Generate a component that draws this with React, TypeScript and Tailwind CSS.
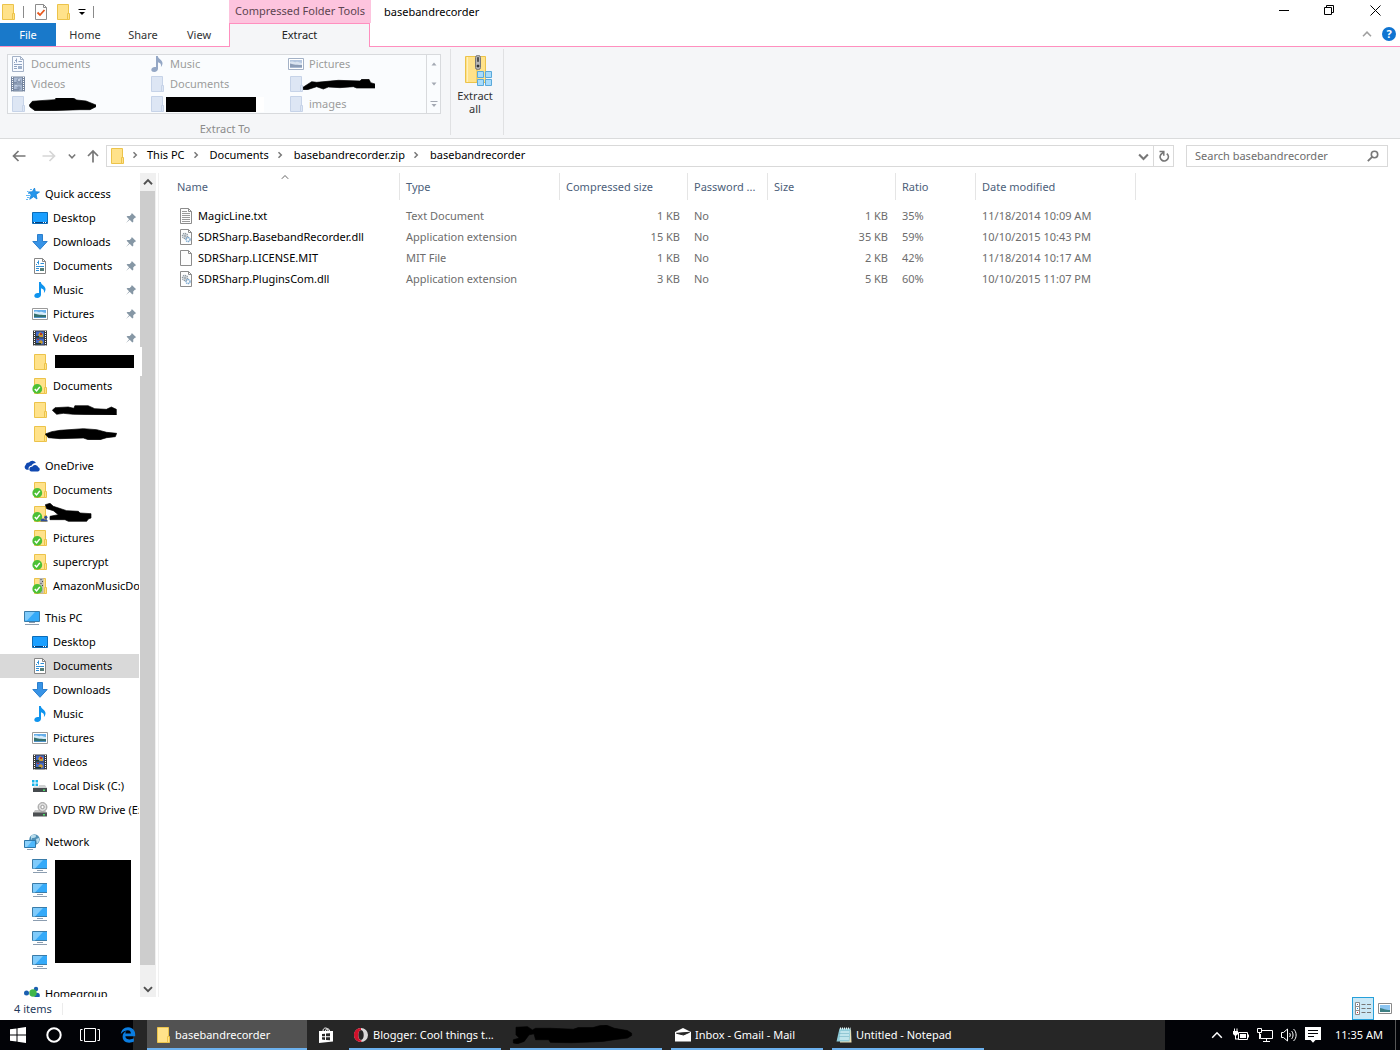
import type { ReactNode } from 'react';
import { FaEdgeLegacy } from 'react-icons/fa';

type IconProps = { className?: string };

/* ---------- 16px icons ---------- */

function Svg({ children, className = 'h-4 w-4', box = '0 0 16 16' }: { children: ReactNode; className?: string; box?: string }) {
  return (
    <svg viewBox={box} className={`${className} shrink-0`} fill="none" aria-hidden="true">
      {children}
    </svg>
  );
}

function FolderShape({ fill = '#ffe28a', edge = '#ecc34a' }: { fill?: string; edge?: string }) {
  return (
    <>
      <path d="M2.500.5h11v15h-11z" fill={fill} stroke={edge} />
      <path d="M12.500 9.500h2v6h-2z" fill={fill} stroke={edge} />
    </>
  );
}

const Folder = ({ className }: IconProps) => (
  <Svg className={className}>
    <FolderShape />
  </Svg>
);

const FadedFolder = () => (
  <Svg>
    <FolderShape fill="#dde6f4" edge="#c6d3e8" />
  </Svg>
);

function SyncBadge() {
  return (
    <>
      <circle cx="5.300" cy="10.900" r="4.900" fill="#4cc035" />
      <path d="M2.800 11l1.800 1.900 3.200-4" stroke="#fff" strokeWidth="1.500" />
    </>
  );
}

const SyncedFolder = () => (
  <Svg>
    <FolderShape />
    <SyncBadge />
  </Svg>
);

const SharedFolder = () => (
  <Svg>
    <FolderShape />
    <SyncBadge />
    <circle cx="13.800" cy="11.300" r="1.600" fill="#2f4f97" />
    <path d="M8.500 15.500c0-2 1-3 2.200-3s1.600.6 1.800 1.200c.4-.6 3.300-.6 3.300 1.800z" fill="#2f4f97" />
  </Svg>
);

function Zipper() {
  return (
    <>
      <path d="M7.500 0h4v15.500h-4z" fill="#b9b9b9" />
      <path d="M8.500 1h1v1h-1zM10 3h1v1h-1zM8.500 5h1v1h-1zM10 7h1v1h-1zM8.500 12h1v1h-1z" fill="#4a4a4a" />
    </>
  );
}

const SyncedZip = () => (
  <Svg>
    <FolderShape />
    <Zipper />
    <SyncBadge />
  </Svg>
);

const Desktop = () => (
  <Svg>
    <path d="M.5 2.500h15v11H.5z" fill="#1a9fff" stroke="#0b6cb8" />
    <path d="M1 12h14v1H1z" fill="#0a3d78" />
    <path d="M2 12h1v1H2zM11 12h1v1h-1zM13 12h1v1h-1z" fill="#fff" />
  </Svg>
);

const Download = () => (
  <Svg>
    <path d="M5.500.5h5v7h4.700L8 15.300.8 7.500h4.700z" fill="#3793e6" stroke="#2b7fcd" />
  </Svg>
);

const Doc = ({ faded = false }: { faded?: boolean }) => (
  <Svg>
    <path d="M2.500.5h8l3 3v12h-11z" fill={faded ? '#f7faff' : '#fff'} stroke={faded ? '#a3b1c6' : '#868686'} />
    <path d="M10.500.5v3h3" stroke={faded ? '#a3b1c6' : '#868686'} />
    <path d="M4 6.500h1M5 4.500h2M6.500 2.500v4M8.500 5.500h3.500M4 8.500h8M4 10.500h3M4 12.500h3" stroke={faded ? '#8fa3c0' : '#2f8fd6'} />
    <path d="M8 10h4v3H8z" fill={faded ? '#9db0ca' : '#557d77'} />
  </Svg>
);

const Music = ({ faded = false }: { faded?: boolean }) => (
  <Svg>
    <path
      d="M7 0h1.800c.2 3 4.900 4 4.700 7.300 0 1.500-.6 2.700-1.600 3.700.6-2.700-.3-4-2.900-4.700v6.500c0 1.800-1.600 3.200-3.800 3.200C3.500 16 2.300 15.200 2.300 13.800c0-1.600 1.700-2.900 3.400-2.900.5 0 .9.1 1.300.2z"
      fill={faded ? '#94a7c5' : '#0f94ee'}
    />
  </Svg>
);

const Picture = ({ faded = false }: { faded?: boolean }) => (
  <Svg>
    <path d="M.5 2.500h15v11H.5z" fill="#fff" stroke={faded ? '#a3b1c6' : '#9a9a9a'} />
    <path d="M2 4h12v8H2z" fill={faded ? '#b5c7e0' : '#65aeea'} />
    <path d="M2 6c3-1.500 4 1 6 0s4 1 6 1v2H2z" fill={faded ? '#dae4f1' : '#d6ecfb'} />
    <path d="M2 7.500c3 .5 4 1.500 12 1.500V11H2z" fill={faded ? '#8c9db7' : '#35706f'} />
    <path d="M2 11h12v1H2z" fill={faded ? '#a8b9d2' : '#4f92c7'} />
  </Svg>
);

const Video = ({ faded = false }: { faded?: boolean }) => (
  <Svg>
    <path d="M1 .5h14v15H1z" fill={faded ? '#76869f' : '#3b3b3b'} />
    <path d="M4 1.500h8v6H4zM4 8.500h8v6H4z" fill={faded ? '#a9b9d2' : '#4169c9'} />
    <path d="M2.500 1v14.500M13.500 1v14.500" stroke="#fff" strokeWidth="1" strokeDasharray="1 1" />
    <path d="M6 5l2-3 3 2v3H8zM6 12l3-2 2 2-1 2z" fill={faded ? '#8898b2' : '#c99a2c'} />
    <path d="M8 3h2v2H8zM5 9h2v1H5z" fill={faded ? '#c2cfe2' : '#b5342c'} />
    <path d="M4 6h3v1.500H4zM4 13h5v1.500H4z" fill={faded ? '#7d8da8' : '#1e3a28'} />
  </Svg>
);

const QuickAccess = () => (
  <Svg>
    <path d="M10.500 2l.9 3.700 4.100.3-3.400 2.400.9 4.600-3.400-2.300-3.900 2.600 1.500-4.400L4.500 6l3.800-.2z" fill="#2596ec" stroke="#1683d8" strokeWidth=".8" />
    <path d="M6 3.500h2M3 5.500h1.500M4 7.500h1.500M2 9.500h4M3 11.500h2.500M2 13.500h2" stroke="#62b6f3" />
  </Svg>
);

const OneDrive = () => (
  <Svg>
    <path d="M2.700 11.800A2.800 2.800 0 011.600 7 3.300 3.300 0 015 4.600 4 4 0 0112 5c-3 .2-4 1.600-4.200 2.500-2.600.1-3.800 2.300-2.900 4.300z" fill="#1048b0" />
    <path d="M7.500 13.500a2.400 2.400 0 01.6-4.800 3.400 3.400 0 016.200.6 2.200 2.200 0 01-.2 4.200z" fill="#1048b0" />
  </Svg>
);

const Monitor = ({ small = false }: { small?: boolean }) => (
  <Svg>
    <path d={small ? 'M.5 1.500h15v9H.5z' : 'M.5 1.500h15v10H.5z'} fill="#35aaf9" stroke="#3a7ca9" />
    <path d="M1 2h10L3 10.500H1z" fill="#7fcbfb" />
    <path d="M5 12.500h6M1 14.500h14" stroke="#8b9db0" />
  </Svg>
);

const LocalDisk = () => (
  <Svg>
    <path d="M0 2h2.500v2.500H0zM3.500 2H6v2.500H3.500zM0 5.500h2.500V8H0zM3.500 5.500H6V8H3.500z" fill="#18b4ea" />
    <path d="M7 7h6l2 3H1l1-1.500h5z" fill="#d0d2d3" />
    <path d="M1 10h14v4H1z" fill="#454a4d" />
    <path d="M11 11.500h2V13h-2z" fill="#4be06a" />
  </Svg>
);

const DvdDrive = () => (
  <Svg>
    <path d="M3 8h10l2 3H1z" fill="#c4c4c4" />
    <circle cx="10.500" cy="5" r="4.400" fill="#dedede" stroke="#999" />
    <circle cx="10.500" cy="5" r="1.700" fill="#fff" stroke="#999" />
    <path d="M1 10.500h14v4H1z" fill="#4d5053" />
    <path d="M11 12h2v1.500h-2z" fill="#4be06a" />
  </Svg>
);

const NetworkGlobe = () => (
  <Svg>
    <circle cx="10.500" cy="5.500" r="5.200" fill="#4f8fb5" />
    <path d="M7 2c2-2 5-1 5 0s-1 2-3 2-1 2-2 2zM12 5l3-1v3l-2 3z" fill="#b7dcec" />
    <path d="M.5 6.500h11v7H.5z" fill="#4fb8fb" stroke="#2d78aa" />
    <path d="M1 7h7l-5 6H1z" fill="#8bd1fc" />
    <path d="M3 15.500h6" stroke="#8b9db0" />
  </Svg>
);

const Homegroup = () => (
  <Svg>
    <circle cx="2.500" cy="7" r="2.500" fill="#1a5fb0" />
    <circle cx="12" cy="3" r="2.200" fill="#1a5fb0" />
    <circle cx="13" cy="9.500" r="2.800" fill="#1a5fb0" />
    <circle cx="9" cy="7" r="3.700" fill="#3fb64a" />
  </Svg>
);

const Pin = () => (
  <Svg className="h-3 w-3" box="0 0 12 12">
    <path d="M6.800 1l4.400 4.300-1.300.4-1.700 1.700.1 2.300-1 .7-2.600-2.600L1 11l3.100-3.800L1.600 4.800l.8-.9 2.300.1 1.700-1.700z" fill="#8697a5" />
  </Svg>
);

function PageShape() {
  return (
    <>
      <path d="M2.500.5h8l3 3v12h-11z" fill="#fdfdfd" stroke="#8c8c8c" />
      <path d="M10.500.5v3h3" stroke="#8c8c8c" />
    </>
  );
}

const TextFile = () => (
  <Svg>
    <PageShape />
    <path d="M4 3.500h5M4 5.500h8M4 7.500h8M4 9.500h8M4 11.500h8M4 13.500h8" stroke="#9a9a9a" />
  </Svg>
);

const PlainFile = () => (
  <Svg>
    <PageShape />
  </Svg>
);

const DllFile = () => (
  <Svg>
    <PageShape />
    <circle cx="7" cy="7" r="2.500" stroke="#8f9aa3" strokeWidth="1.500" strokeDasharray="1.300 .6" />
    <circle cx="7" cy="7" r="1" stroke="#8f9aa3" />
    <circle cx="10" cy="10.500" r="2" stroke="#7ba8cf" strokeWidth="1.500" strokeDasharray="1.200 .5" />
  </Svg>
);

const CheckPage = () => (
  <Svg>
    <PageShape />
    <path d="M4.500 8.500l2.500 2.500 4.500-5" stroke="#e8571c" strokeWidth="1.800" />
  </Svg>
);

function Chevron({ dir, className = 'h-2 w-2', width = 1.5 }: { dir: 'up' | 'down' | 'right'; className?: string; width?: number }) {
  const d = { up: 'M.8 5.800L4 2.500l3.200 3.300', down: 'M.8 2.500L4 5.800l3.200-3.300', right: 'M2.500 1.200L5.300 4 2.500 6.800' }[dir];
  return (
    <Svg className={className} box="0 0 8 8">
      <path d={d} stroke="currentColor" strokeWidth={width} />
    </Svg>
  );
}

/* Blacked-out labels */
function Scribble({ box, d, className }: { box: string; d: string; className: string }) {
  return (
    <Svg box={box} className={className}>
      <path d={d} fill="#000" stroke="#000" strokeWidth="2" strokeLinejoin="round" />
    </Svg>
  );
}

/* ---------- Title bar and ribbon ---------- */

function TitleArea() {
  return (
    <header className="relative flex h-[47px] shrink-0 border-b border-[#ff8fbf] bg-white">
      <div className="flex w-[229px] flex-col">
        <div className="flex h-[23px] items-center">
          <Folder />
          <span className="ml-[7px] h-3 w-px bg-[#8a8a8a]" />
          <button aria-label="Properties" className="ml-[9px]"><CheckPage /></button>
          <button aria-label="New folder" className="ml-[6px]"><Folder /></button>
          <button aria-label="Customize Quick Access Toolbar" className="ml-[7px]">
            <Svg className="h-2 w-2" box="0 0 8 8">
              <path d="M.5 1.500h7" stroke="#000" />
              <path d="M1 4h6L4 7z" fill="#000" />
            </Svg>
          </button>
          <span className="ml-[7px] h-3 w-px bg-[#8a8a8a]" />
        </div>
        <nav className="flex h-[23px] text-[#333]">
          <button className="w-14 bg-[#1979ca] text-white">File</button>
          <button className="w-[58px]">Home</button>
          <button className="w-[58px]">Share</button>
          <button className="w-[54px]">View</button>
        </nav>
      </div>
      <div className="flex h-[47px] w-[142px] flex-col">
        <div className="flex h-[23px] items-center justify-center bg-[#fdc4de] pb-[2px] whitespace-nowrap text-[#5c4450]">
          Compressed Folder Tools
        </div>
        <button className="mr-px h-6 border-x border-t border-[#ff8fbf] bg-[#f5f6f8] pb-px text-[#222]">Extract</button>
      </div>
      <h1 className="ml-[13px] flex h-6 items-center text-[11px]">basebandrecorder</h1>
      <div className="ml-auto flex flex-col">
        <div className="mr-[2px] flex h-[22px] items-center">
          <button aria-label="Minimize" className="flex h-5 w-[46px] justify-center">
            <Svg className="h-5 w-[11px]" box="0 0 11 20"><path d="M1 9.500h10" stroke="#000" /></Svg>
          </button>
          <button aria-label="Restore" className="flex h-5 w-[46px] justify-center">
            <Svg className="h-5 w-[11px]" box="0 0 11 20">
              <path d="M.5 6.500h7v7h-7zM2.500 6.500v-2h7v7h-2" stroke="#000" />
            </Svg>
          </button>
          <button aria-label="Close" className="flex h-5 w-[46px] justify-center">
            <Svg className="h-5 w-[11px]" box="0 0 11 20"><path d="M.5 4.500l10 10M10.500 4.500l-10 10" stroke="#000" /></Svg>
          </button>
        </div>
        <div className="flex h-6 items-center justify-end gap-[10px] pr-1">
          <button aria-label="Minimize the Ribbon" className="text-[#a0a0a0]"><Chevron dir="up" className="h-[10px] w-[10px]" width={1.2} /></button>
          <button aria-label="Help" className="flex h-[14px] w-[14px] items-center justify-center rounded-full bg-[#0f74d1] text-[11px] font-bold text-white">?</button>
        </div>
      </div>
    </header>
  );
}

function GalleryItem({ icon, children }: { icon: ReactNode; children: ReactNode }) {
  return (
    <button className="flex h-5 w-[139px] items-center gap-[5px] pl-[2px] text-left text-[#9c9c9c]">
      {icon}
      {children}
    </button>
  );
}

function Ribbon() {
  return (
    <section className="flex h-[92px] shrink-0 border-b border-[#dadbdc] bg-[#f5f6f8]">
      <div className="flex w-[450px] flex-col items-center pt-[7px]">
        <div className="mr-[2px] flex h-[60px] w-[434px] bg-[#fafcfe] pl-px outline outline-1 -outline-offset-1 outline-[#d8dadd]">
          <div className="flex flex-1 flex-wrap content-start">
            <GalleryItem icon={<Doc faded />}>Documents</GalleryItem>
            <GalleryItem icon={<Music faded />}>Music</GalleryItem>
            <GalleryItem icon={<Picture faded />}>Pictures</GalleryItem>
            <GalleryItem icon={<Video faded />}>Videos</GalleryItem>
            <GalleryItem icon={<FadedFolder />}>Documents</GalleryItem>
            <GalleryItem icon={<FadedFolder />}>
              <Scribble
                className="-ml-[6px] h-[11px] w-[72px]"
                box="249 237 216 33"
                d="M249 262L275 245 290 247 355 241 420 243 425 238 447 238 452 248 465 252 465 264 410 264 400 260 360 263 325 261 310 267 290 260 262 269 250 269z"
              />
            </GalleryItem>
            <GalleryItem icon={<FadedFolder />}>
              <Scribble
                className="-ml-[2px] h-[13px] w-[67px]"
                box="87 291 201 39"
                d="M88 312L97 301 120 299 165 296 168 291 220 291 230 297 258 300 288 312 288 317 270 326 240 326 155 329 105 329 90 318z"
              />
            </GalleryItem>
            <GalleryItem icon={<FadedFolder />}>
              <span className="-ml-1 h-[15px] w-[98px] border-r-8 border-white bg-black" />
            </GalleryItem>
            <GalleryItem icon={<FadedFolder />}>images</GalleryItem>
          </div>
          <div className="flex w-[15px] flex-col border-l border-[#d8dadd] text-[#a4a9b3]">
            <button aria-label="Row up" className="flex h-5 items-center justify-center">
              <Svg className="h-2 w-2" box="0 0 8 8"><path d="M1.500 5.500h5L4 2.500z" fill="currentColor" /></Svg>
            </button>
            <button aria-label="Row down" className="flex h-5 items-center justify-center">
              <Svg className="h-2 w-2" box="0 0 8 8"><path d="M1.500 2.500h5L4 5.500z" fill="currentColor" /></Svg>
            </button>
            <button aria-label="More" className="flex h-[19px] items-center justify-center">
              <Svg className="h-2 w-2" box="0 0 8 8"><path d="M1.500 4h5L4 7zM.5 1h7v1h-7z" fill="currentColor" /></Svg>
            </button>
          </div>
        </div>
        <div className="mt-[7px] text-[#8c8c8c]">Extract To</div>
      </div>
      <div className="my-[2px] flex h-[86px] w-[54px] flex-col border-x border-[#e0e1e3]">
        <button className="flex flex-col items-center pt-[5px] pr-[4px] text-[11px] leading-[13px] text-[#333]">
          <Svg className="mb-[3px] ml-[6px] h-8 w-8" box="0 0 32 32">
            <path d="M3.500 2.500h20v26h-20z" fill="#ffe28a" stroke="#ecc34a" />
            <path d="M5.500 3v25" stroke="#fff0bd" />
            <path d="M16 2v14M15 15v13" stroke="#e4bb45" />
            <rect x="13.500" y="1.500" width="5" height="14" rx="2" fill="#b4b4b4" stroke="#777" />
            <path d="M15.500 3.500h1v4h-1zM15 11h2v2h-2z" fill="#333" stroke="#333" strokeWidth=".5" />
            <path d="M15.500 17.500h6v6h-6zM23.500 17.500h6v6h-6zM15.500 25.500h6v6h-6zM23.500 25.500h6v6h-6z" fill="#a9dcfb" stroke="#5aa9da" />
          </Svg>
          <span>Extract<br />all</span>
        </button>
      </div>
    </section>
  );
}

/* ---------- Address bar ---------- */

function AddressBar() {
  const path = ['This PC', 'Documents', 'basebandrecorder.zip', 'basebandrecorder'];
  return (
    <div className="flex h-[34px] shrink-0 items-center bg-white pr-3 pl-3 text-[#777]">
      <button aria-label="Back"><Svg className="h-[14px] w-[14px]" box="0 0 14 14"><path d="M13.500 7H2M6.500 2L1.500 7l5 5" stroke="#777" strokeWidth="1.700" /></Svg></button>
      <button aria-label="Forward" className="ml-4"><Svg className="h-[14px] w-[14px]" box="0 0 14 14"><path d="M.5 7H12M7.500 2l5 5-5 5" stroke="#d6d6d6" strokeWidth="1.700" /></Svg></button>
      <button aria-label="Recent locations" className="ml-3"><Chevron dir="down" /></button>
      <button aria-label="Up" className="ml-[10px]"><Svg className="h-[14px] w-[14px]" box="0 0 14 14"><path d="M7 13.500V2M2 7l5-5 5 5" stroke="#777" strokeWidth="1.700" /></Svg></button>
      <div className="ml-[6px] flex h-[22px] flex-1 items-center border border-[#d9d9d9] pl-[2px]">
        <Folder />
        <nav aria-label="Path" className="flex flex-1 items-center pb-[2px] text-black">
          {path.map((p, i) => (
            <span key={p} className="flex items-center">
              <span className={`flex justify-center pr-[2px] text-[#777] ${i === 0 ? 'w-[22px]' : 'w-[25px]'}`}><Chevron dir="right" /></span>
              <button className="whitespace-nowrap">{p}</button>
            </span>
          ))}
        </nav>
        <button aria-label="Previous locations" className="mr-[4px]"><Chevron dir="down" className="h-[11px] w-[11px]" /></button>
        <button aria-label="Refresh" className="flex h-5 w-5 items-center justify-center border-l border-[#d9d9d9]">
          <Svg className="h-3 w-3" box="0 0 12 12">
            <path d="M8.800 3.600A4.100 4.100 0 112.800 4.600L5.500 2" stroke="#777" strokeWidth="1.700" />
            <path d="M1.500 1.500h4.300v4.300" stroke="#777" strokeWidth="1.500" />
          </Svg>
        </button>
      </div>
      <label className="ml-3 flex h-[22px] w-[202px] items-center border border-[#d9d9d9] pr-2 pl-2">
        <input aria-label="Search basebandrecorder" placeholder="Search basebandrecorder" className="min-w-0 flex-1 outline-none placeholder:text-[#6d6d6d]" />
        <Svg className="h-3 w-3" box="0 0 12 12">
          <circle cx="7.500" cy="4.500" r="3.200" stroke="#777" strokeWidth="1.600" />
          <path d="M5.200 6.800L.8 11.200" stroke="#777" strokeWidth="1.800" />
        </Svg>
      </label>
    </div>
  );
}

/* ---------- Navigation pane ---------- */

function Group({ icon, title, children }: { icon: ReactNode; title: string; children?: ReactNode }) {
  return (
    <div className="mb-2">
      <button className="flex h-6 w-full items-center gap-[5px] pl-6 text-left">
        {icon}
        {title}
      </button>
      {children}
    </div>
  );
}

function NavItem({ icon, children, pinned, selected }: { icon: ReactNode; children?: ReactNode; pinned?: boolean; selected?: boolean }) {
  return (
    <button className={`flex h-6 w-[139px] items-center gap-[5px] overflow-hidden pl-8 text-left whitespace-nowrap ${selected ? 'bg-[#d9d9d9]' : ''}`}>
      {icon}
      {children}
      {pinned && <span className="mr-[2px] ml-auto"><Pin /></span>}
    </button>
  );
}

function Sidebar() {
  return (
    <nav aria-label="Folders" className="w-[140px] overflow-hidden pt-[9px]">
      <Group icon={<QuickAccess />} title="Quick access">
        <NavItem icon={<Desktop />} pinned>Desktop</NavItem>
        <NavItem icon={<Download />} pinned>Downloads</NavItem>
        <NavItem icon={<Doc />} pinned>Documents</NavItem>
        <NavItem icon={<Music />} pinned>Music</NavItem>
        <NavItem icon={<Picture />} pinned>Pictures</NavItem>
        <NavItem icon={<Video />} pinned>Videos</NavItem>
        <NavItem icon={<Folder />}><span className="mb-px ml-[2px] h-[13px] w-[79px] bg-black" /></NavItem>
        <NavItem icon={<SyncedFolder />}>Documents</NavItem>
        <NavItem icon={<Folder />}>
          <Scribble
            className="-ml-px h-[10px] w-[65px]"
            box="156 312 196 30"
            d="M157 328L165 320 205 318 222 322 225 314 265 314 285 323 320 325 335 318 350 325 350 342 280 341 220 340 190 337 170 340z"
          />
        </NavItem>
        <NavItem icon={<Folder />}>
          <Scribble
            className="-ml-2 h-3 w-[72px]"
            box="135 387 216 36"
            d="M136 405L155 398 180 394 250 389 290 392 320 400 350 403 346 413 320 416 300 422 265 422 250 417 180 419 145 416z"
          />
        </NavItem>
      </Group>
      <Group icon={<OneDrive />} title="OneDrive">
        <NavItem icon={<SyncedFolder />}>Documents</NavItem>
        <NavItem icon={<SharedFolder />}>
          <Scribble
            className="-ml-2 mb-1 h-[19px] w-[47px]"
            box="135 155 141 57"
            d="M136 160L150 156 160 165 200 178 235 180 240 185 273 187 273 200 265 203 260 210 205 210 195 205 150 205 150 195 175 190 160 178 140 172z"
          />
        </NavItem>
        <NavItem icon={<SyncedFolder />}>Pictures</NavItem>
        <NavItem icon={<SyncedFolder />}>supercrypt</NavItem>
        <NavItem icon={<SyncedZip />}>AmazonMusicDownloads</NavItem>
      </Group>
      <Group icon={<Monitor />} title="This PC">
        <NavItem icon={<Desktop />}>Desktop</NavItem>
        <NavItem icon={<Doc />} selected>Documents</NavItem>
        <NavItem icon={<Download />}>Downloads</NavItem>
        <NavItem icon={<Music />}>Music</NavItem>
        <NavItem icon={<Picture />}>Pictures</NavItem>
        <NavItem icon={<Video />}>Videos</NavItem>
        <NavItem icon={<LocalDisk />}>Local Disk (C:)</NavItem>
        <NavItem icon={<DvdDrive />}>DVD RW Drive (E:)</NavItem>
      </Group>
      <Group icon={<NetworkGlobe />} title="Network">
        <div className="flex items-start">
          <div className="mr-2 w-[47px] overflow-hidden">
            {[1, 2, 3, 4, 5].map((n) => (
              <NavItem key={n} icon={<Monitor small />} />
            ))}
          </div>
          <div className="mt-[6px] h-[103px] w-[76px] bg-black" />
        </div>
      </Group>
      <Group icon={<Homegroup />} title="Homegroup" />
    </nav>
  );
}

function Scrollbar() {
  return (
    <div className="relative flex w-4 flex-col bg-[#f0f0f0] text-[#505050]">
      <button aria-label="Scroll up" className="flex h-[18px] items-center justify-center"><Chevron dir="up" className="h-[10px] w-[10px]" /></button>
      <div className="mr-px mb-[15px] flex-1 bg-[#cdcdcd]" />
      <button aria-label="Scroll down" className="flex h-[17px] items-center justify-center"><Chevron dir="down" className="h-[10px] w-[10px]" /></button>
      <span className="absolute top-[174px] left-0 h-[29px] w-[2px] bg-white" />
    </div>
  );
}

/* ---------- File list ---------- */

const files = [
  { icon: <TextFile />, name: 'MagicLine.txt', type: 'Text Document', packed: '1 KB', size: '1 KB', ratio: '35%', date: '11/18/2014 10:09 AM' },
  { icon: <DllFile />, name: 'SDRSharp.BasebandRecorder.dll', type: 'Application extension', packed: '15 KB', size: '35 KB', ratio: '59%', date: '10/10/2015 10:43 PM' },
  { icon: <PlainFile />, name: 'SDRSharp.LICENSE.MIT', type: 'MIT File', packed: '1 KB', size: '2 KB', ratio: '42%', date: '11/18/2014 10:17 AM' },
  { icon: <DllFile />, name: 'SDRSharp.PluginsCom.dll', type: 'Application extension', packed: '3 KB', size: '5 KB', ratio: '60%', date: '10/10/2015 11:07 PM' },
];

function Th({ children, first }: { children: ReactNode; first?: boolean }) {
  return (
    <th className="p-0 text-left font-normal">
      <div className={`relative mb-[5px] flex h-[27px] items-center border-r border-[#e5e5e5] ${first ? 'pl-[18px]' : 'pl-[6px]'}`}>
        {children}
        {first && <span className="absolute top-0 left-[122px] text-[#666]"><Chevron dir="up" width={1} /></span>}
      </div>
    </th>
  );
}

function FileTable() {
  return (
    <main className="ml-[2px] min-w-0 flex-1 overflow-hidden border-l border-[#f0f0f0]">
      <table className="w-[977px] table-fixed border-collapse whitespace-nowrap">
        <colgroup>
          <col className="w-[241px]" />
          <col className="w-[160px]" />
          <col className="w-[128px]" />
          <col className="w-[80px]" />
          <col className="w-[128px]" />
          <col className="w-[80px]" />
          <col className="w-[160px]" />
        </colgroup>
        <thead className="text-[#4c607a]">
          <tr>
            <Th first>Name</Th>
            <Th>Type</Th>
            <Th>Compressed size</Th>
            <Th>Password ...</Th>
            <Th>Size</Th>
            <Th>Ratio</Th>
            <Th>Date modified</Th>
          </tr>
        </thead>
        <tbody className="text-[#6d6d6d]">
          {files.map((f) => (
            <tr key={f.name} className="h-[21px]">
              <td className="p-0 pl-[19px] text-black"><div className="flex items-center gap-[4px]">{f.icon}{f.name}</div></td>
              <td className="p-0 pl-[6px]">{f.type}</td>
              <td className="p-0 pr-2 text-right">{f.packed}</td>
              <td className="p-0 pl-[6px]">No</td>
              <td className="p-0 pr-2 text-right">{f.size}</td>
              <td className="p-0 pl-[6px]">{f.ratio}</td>
              <td className="p-0 pl-[6px]">{f.date}</td>
            </tr>
          ))}
        </tbody>
      </table>
    </main>
  );
}

function StatusBar() {
  return (
    <footer className="flex h-[23px] shrink-0 items-center bg-white pr-1 pl-[14px] text-[#1e395b]">
      <span>4 items</span>
      <span className="ml-[10px] h-3 w-px bg-[#ececec]" />
      <button aria-label="Details view" className="ml-auto flex h-[23px] w-[22px] items-center justify-center border border-[#26a0da] bg-[#cbe8f6]">
        <Svg>
          <path d="M.5 1.500h4v4h-4zM.5 5.500h4v4h-4zM.5 9.500h4v4h-4z" fill="#fff" stroke="#8b8b8b" />
          <path d="M2 3h1v1H2z" fill="#46a" /><path d="M2 7h1v1H2z" fill="#28c" /><path d="M2 11h1v1H2z" fill="#d22" />
          <path d="M6.500 3.500h4M12 3.500h4M6.500 7.500h4M12 7.500h4M6.500 11.500h4M12 11.500h4" stroke="#777" />
        </Svg>
      </button>
      <button aria-label="Large icons view" className="flex h-[23px] w-[22px] items-center justify-center pb-[2px]">
        <Svg className="h-[14px] w-[14px]" box="0 0 14 14">
          <path d="M.5 2.500h13v10H.5z" fill="#fff" stroke="#8b8b8b" />
          <path d="M2 4h10v7H2z" fill="#8cc5f1" />
          <path d="M2 7c3 .5 5 2 10 2v2H2z" fill="#3d7f83" />
        </Svg>
      </button>
    </footer>
  );
}

/* ---------- Taskbar ---------- */

function Task({ icon, children, active }: { icon: ReactNode; children?: ReactNode; active?: boolean }) {
  return (
    <button
      className={`flex h-[30px] items-center gap-[4px] overflow-hidden border-b-2 border-[#6cb1ee] pt-px whitespace-nowrap ${active ? 'w-40 bg-[#525252] pl-2' : 'mr-[9px] w-[152px] pl-1'}`}
    >
      {icon}
      {children}
    </button>
  );
}

function Taskbar() {
  return (
    <div className="flex h-[30px] shrink-0 bg-[#020307] text-white">
      <div className="relative z-10 flex w-[133px] items-center pl-[10px]">
        <button aria-label="Start">
          <Svg><path d="M0 2.300L6.500 1.400v6.100H0zM7.500 1.200L16 0v7.500H7.500zM0 8.500h6.500v6.100L0 13.700zM7.500 8.500H16V16l-8.500-1.200z" fill="#fff" /></Svg>
        </button>
        <button aria-label="Cortana" className="ml-5"><Svg><circle cx="8" cy="8" r="6.700" stroke="#fff" strokeWidth="2" /></Svg></button>
        <button aria-label="Task view" className="ml-[18px]">
          <Svg className="h-4 w-5" box="0 0 20 16"><path d="M4.500 1.500h11v13h-11zM2.500 2.500h-2v11h2M17.500 2.500h2v11h-2" stroke="#fff" /></Svg>
        </button>
        <button aria-label="Edge" className="ml-5 text-[#0b7de0]"><FaEdgeLegacy className="h-4 w-4" /></button>
      </div>
      <div className="flex flex-1 bg-[#262626] pl-[14px]">
        <Task active icon={<Folder />}>basebandrecorder</Task>
        <button aria-label="Store" className="flex w-[42px] items-center pl-[11px]">
          <Svg>
            <path d="M1 4h14v10.500L1 16z" fill="#fff" />
            <path d="M5 4c0-4 5-4 5 0M7.500 4c0-3 4-3 4 0" stroke="#fff" />
            <path d="M4 7l3-.3v2.600H4zM8 6.600l4-.3v3H8zM4 10.300h3v2.600L4 12.600zM8 10.300h4v3l-4-.3z" fill="#262626" />
          </Svg>
        </button>
        <Task
          icon={
            <Svg>
              <path fillRule="evenodd" d="M8 1a7 7 0 100 14A7 7 0 008 1zm0 2c1.700 0 2.700 2.200 2.700 5S9.700 13 8 13s-2.700-2.200-2.700-5S6.300 3 8 3z" fill="#d8d8d8" />
              <path d="M8 1C4 1 1 4 1 8s3 7 7 7l1-1.300C6 13.500 5.300 10.800 5.300 8S6.300 3 8 3z" fill="#d0102a" />
            </Svg>
          }
        >
          Blogger: Cool things t...
        </Task>
        <Task
          icon={
            <Scribble
              className="-ml-[2px] h-[19px] w-[121px]"
              box="36 80 363 58"
              d="M45 87L80 85 95 95 105 90 150 90 220 93 235 88 280 88 300 82 320 80 345 90 385 97 398 105 398 112 385 120 350 124 310 130 270 132 215 134 150 133 145 125 105 125 100 107 85 110 70 130 50 137 37 135 37 125 55 120 45 110z"
            />
          }
        />
        <Task icon={<Svg><path d="M0 5l8-4 8 4v9.500H0z" fill="#fff" /><path d="M1.500 6.300L14.500 5.300 8.500 8z" fill="#262626" stroke="#262626" /></Svg>}>
          Inbox - Gmail - Mail
        </Task>
        <Task
          icon={
            <Svg>
              <path d="M4 2.500h11l.5 13H4z" fill="#e9dfb8" />
              <path d="M3.500 1.500h11l-1 13H.5z" fill="#8fcbd8" />
              <path d="M4.500 4h9l-.7 9H3.500z" fill="#c0e5ec" />
              <path d="M4 1.500h10.500" stroke="#e8f6f8" strokeWidth="2" strokeDasharray="1 1" />
              <path d="M3 6.500h10M3 9.500h10" stroke="#74b4c4" strokeWidth=".6" />
            </Svg>
          }
        >
          Untitled - Notepad
        </Task>
      </div>
      <div className="flex w-[235px] items-center">
        <button aria-label="Show hidden icons" className="ml-[46px]"><Chevron dir="up" className="h-3 w-3" width={1} /></button>
        <div className="ml-[10px] flex gap-2">
          <Svg>
            <path d="M5.500 5.500h9v7h-9zM15.500 7.500v3" stroke="#fff" />
            <path d="M7 7h6v4H7z" fill="#fff" />
            <path d="M0 4h5v3L3.500 8.500h-2L0 7zM1 1.500h1V4H1zM3.500 1.500h1V4h-1zM2 8h1v3.500h3v1H2z" fill="#fff" />
          </Svg>
          <Svg><path d="M4 3.500h11.500v8H3.500V7M9.500 12v3M6 14.500h7M.5 1.500h4v4h-4zM2.500 6v6" stroke="#fff" /></Svg>
          <Svg><path d="M.5 5.500h2l4-3.500v12l-4-3.500h-2zM8.500 6c1 1 1 3 0 4M10.500 4c2 2 2 6 0 8M12.500 2c3.500 3 3.500 9 0 12" stroke="#fff" /></Svg>
          <Svg><path d="M0 0h16v13h-5.500L8 15.800 5.500 13H0z" fill="#fff" /><path d="M3 3.500h10M3 6.500h10M3 9.500h6" stroke="#020307" /></Svg>
        </div>
        <time className="ml-[14px] whitespace-nowrap">11:35 AM</time>
        <span className="mr-1 ml-auto h-[30px] w-px bg-[#565656]" />
      </div>
    </div>
  );
}

export default function App() {
  return (
    <div className="flex h-screen flex-col overflow-hidden bg-white font-['Noto_Sans','Open_Sans',sans-serif] text-[11px] leading-4 text-black">
      <TitleArea />
      <Ribbon />
      <AddressBar />
      <div className="flex min-h-0 flex-1">
        <Sidebar />
        <Scrollbar />
        <FileTable />
      </div>
      <StatusBar />
      <Taskbar />
    </div>
  );
}
